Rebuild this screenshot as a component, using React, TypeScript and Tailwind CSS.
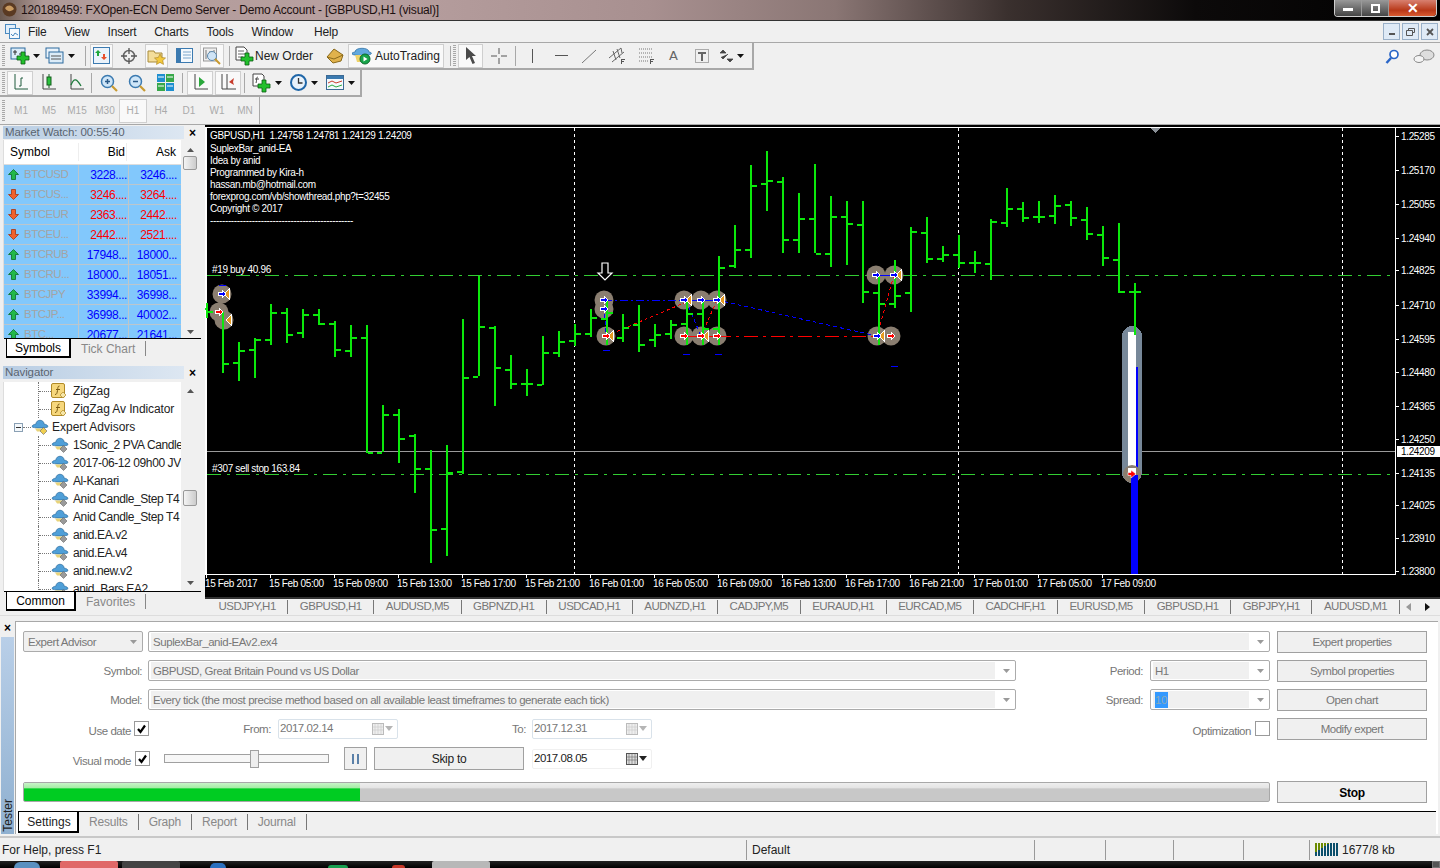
import React from 'react';

// [x, high, low, open, close]
const bars: number[][] = [
  [206, 303, 318, 308, 311], [222, 312, 373, 310, 363], [238, 342, 381, 362, 350], [254, 338, 378, 349, 339],
  [270, 304, 345, 339, 312], [286, 308, 343, 312, 334], [302, 309, 338, 332, 314], [318, 309, 325, 314, 323],
  [334, 321, 357, 323, 349], [350, 325, 357, 350, 337], [366, 325, 453, 337, 452], [382, 405, 452, 452, 414],
  [398, 409, 463, 414, 438], [414, 434, 493, 435, 468], [430, 450, 563, 468, 529], [446, 445, 556, 528, 472],
  [462, 319, 474, 471, 377], [478, 276, 376, 376, 326], [494, 326, 406, 327, 367], [510, 355, 389, 369, 383],
  [526, 369, 396, 383, 383], [542, 336, 385, 384, 352], [558, 331, 357, 352, 341], [574, 324, 346, 340, 333],
  [590, 309, 337, 333, 317], [606, 300, 345, 318, 312], [622, 314, 342, 337, 327], [638, 305, 352, 324, 344],
  [654, 324, 347, 339, 334], [670, 320, 339, 333, 324], [686, 302, 345, 323, 313], [702, 302, 345, 313, 328],
  [718, 256, 345, 328, 267], [734, 225, 268, 265, 249], [750, 165, 258, 249, 185], [766, 151, 211, 183, 180],
  [782, 177, 253, 181, 239], [798, 193, 253, 239, 218], [814, 164, 253, 218, 253], [830, 196, 267, 253, 216],
  [846, 201, 265, 216, 223], [862, 201, 303, 224, 291], [878, 277, 345, 292, 303], [894, 260, 308, 303, 295],
  [910, 227, 312, 292, 231], [926, 217, 263, 232, 258], [942, 246, 262, 258, 254], [958, 235, 268, 254, 262],
  [974, 251, 273, 262, 262], [990, 219, 280, 263, 221], [1006, 188, 227, 222, 208], [1022, 202, 222, 208, 217],
  [1038, 201, 223, 216, 216], [1054, 195, 224, 215, 205], [1070, 201, 226, 204, 217], [1086, 207, 240, 219, 233],
  [1102, 226, 266, 234, 257], [1118, 223, 293, 259, 291], [1134, 283, 335, 291, 291],
];

const priceLabels: [string, number][] = [
  ['1.25285', 136], ['1.25170', 170], ['1.25055', 204], ['1.24940', 238], ['1.24825', 270], ['1.24710', 305],
  ['1.24595', 339], ['1.24480', 372], ['1.24365', 406], ['1.24250', 439], ['1.24135', 473], ['1.24025', 505],
  ['1.23910', 538], ['1.23800', 571],
];

const timeLabels = [
  '15 Feb 2017', '15 Feb 05:00', '15 Feb 09:00', '15 Feb 13:00', '15 Feb 17:00', '15 Feb 21:00', '16 Feb 01:00',
  '16 Feb 05:00', '16 Feb 09:00', '16 Feb 13:00', '16 Feb 17:00', '16 Feb 21:00', '17 Feb 01:00', '17 Feb 05:00',
  '17 Feb 09:00',
];

const comments = [
  'SuplexBar_anid-EA', 'Idea by anid', 'Programmed by Kira-h', 'hassan.mb@hotmail.com',
  'forexprog.com/vb/showthread.php?t=32455', 'Copyright © 2017', '------------------------------------------------',
];

// x, y, arrow colour, left-pointing tail
const markers: [number, number, string, boolean][] = [
  [222, 294, 'blue', true], [224, 320, 'none', true], [219, 312, 'red', false],
  [604, 309, 'blue', false], [604, 300, 'blue', false], [606, 336, 'red', true],
  [684, 300, 'blue', true], [701, 300, 'blue', false], [717, 300, 'blue', true],
  [684, 336, 'red', false], [701, 336, 'red', true], [717, 336, 'red', false],
  [876, 275, 'blue', false], [894, 275, 'blue', true], [877, 336, 'blue', true], [891, 336, 'red', false],
];

const market = [
  ['BTCUSD', 'up', '3228....', '3246....'], ['BTCUS...', 'down', '3246....', '3264....'],
  ['BTCEUR', 'down', '2363....', '2442....'], ['BTCEU...', 'down', '2442....', '2521....'],
  ['BTCRUB', 'up', '17948...', '18000...'], ['BTCRU...', 'up', '18000...', '18051...'],
  ['BTCJPY', 'up', '33994...', '36998...'], ['BTCJP...', 'up', '36998...', '40002...'],
  ['BTC...', 'up', '20677...', '21641...'],
];

const eas = [
  '1Sonic_2 PVA Candle', '2017-06-12 09h00 JV', 'Al-Kanari', 'Anid Candle_Step T4', 'Anid Candle_Step T4',
  'anid.EA.v2', 'anid.EA.v4', 'anid.new.v2', 'anid_Bars EA2',
];

const chartTabs = [
  'USDJPY,H1', 'GBPUSD,H1', 'AUDUSD,M5', 'GBPNZD,H1', 'USDCAD,H1', 'AUDNZD,H1', 'CADJPY,M5', 'EURAUD,H1',
  'EURCAD,M5', 'CADCHF,H1', 'EURUSD,M5', 'GBPUSD,H1', 'GBPJPY,H1', 'AUDUSD,M1',
];

const Caret = () => (
  <svg width="7" height="4" viewBox="0 0 7 4" className="shrink-0"><path d="M0 0h7L3.500 4z" fill="#111" /></svg>
);

const Grip = () => (
  <div className="w-[3px] h-[22px] shrink-0 mx-[2px] bg-[repeating-linear-gradient(180deg,#a8a8a8_0,#a8a8a8_1px,transparent_1px,transparent_2px)]" />
);

const Sep = ({ className = '' }: { className?: string }) => <div className={`w-px h-[20px] bg-[#a8a8a8] shrink-0 ${className}`} />;

const Btn = ({ w, pressed, children }: { w: string; pressed?: boolean; children: React.ReactNode }) => (
  <div className={`${w} h-[24px] shrink-0 flex items-center justify-center gap-[3px] ${pressed ? 'border border-[#cfcfcf] bg-[#f9f9f9]' : ''}`}>
    {children}
  </div>
);

const GreenPlus = ({ x, y }: { x: number; y: number }) => (
  <path d={`M${x + 4} ${y}h4v4h4v4h-4v4h-4v-4h-4v-4h4z`} fill="#22c02c" stroke="#0b5c12" strokeWidth="0.8" />
);

const Ico = ({ children, w = 20, h = 20 }: { children: React.ReactNode; w?: number; h?: number }) => (
  <svg width={w} height={h} viewBox={`0 0 ${w} ${h}`} className="shrink-0">{children}</svg>
);

const Arrow = ({ dir }: { dir: string }) => (
  <svg width="11" height="11" viewBox="0 0 11 11" className="shrink-0">
    {dir === 'up'
      ? <path d="M5.500 .5L10.500 5.500H7.500V10.500H3.500V5.500H.5z" fill="#22b84a" stroke="#0c6e28" strokeWidth=".8" />
      : <path d="M5.500 10.500L10.500 5.500H7.500V.5H3.500V5.500H.5z" fill="#f0622c" stroke="#a83510" strokeWidth=".8" />}
  </svg>
);

const EaIcon = ({ diamond = '#9a9a9a' }: { diamond?: string }) => (
  <svg width="18" height="16" viewBox="0 0 18 16" className="shrink-0">
    <path d="M5 5C5 0 13 0 13 5 15.500 5.500 17 6.500 17 7.500 17 9.500 1 9.500 1 7.500 1 6.500 2.500 5.500 5 5z" fill="#4f9fd8" stroke="#2a6a9c" strokeWidth=".7" />
    <path d="M4 9.500h9l-3 3H6z" fill="#e8d37a" />
    <path d="M12.500 8.500l3.500 3.500-3.500 3.500L9 12z" fill={diamond} stroke="#666" strokeWidth=".6" />
  </svg>
);

const FnIcon = () => (
  <svg width="16" height="16" viewBox="0 0 16 16" className="shrink-0">
    <rect x=".5" y=".5" width="13" height="14" rx="1.500" fill="#f6d77c" stroke="#b08a28" />
    <path d="M8.500 3C6.500 3 7 5 6.500 7.500S6 11.500 4 11.500M5 6.500h4" stroke="#7b5a10" fill="none" strokeWidth="1" />
    <path d="M12 9l3 3-3 3-3-3z" fill="#f6e6a8" stroke="#b08a28" strokeWidth=".7" />
  </svg>
);

const Combo = ({ w, children, plain }: { w: string; children?: React.ReactNode; plain?: boolean }) => (
  <div className={`${w} h-[21px] shrink-0 flex items-center justify-between border border-[#ababab] rounded-[2px] pl-[2px] pr-[5px] text-[#777] text-[11.500px] tracking-[-0.43px] ${plain ? 'bg-[#f0f0f0]' : 'bg-white'}`}>
    <div className="flex-1 min-w-0 h-[17px] bg-[#f0f0f0] flex items-center px-[2px] pt-[2px] mr-[8px] whitespace-nowrap overflow-hidden">{children}</div>
    <svg width="7" height="4" viewBox="0 0 7 4" className="shrink-0"><path d="M0 0h7L3.500 4z" fill="#9a9a9a" /></svg>
  </div>
);

const GreyBtn = ({ children, bold }: { children: React.ReactNode; bold?: boolean }) => (
  <div className={`w-[150px] h-[22px] shrink-0 flex items-center justify-center pt-[2px] border border-[#a0a0a0] bg-[#f0f0f0] ${bold ? 'font-bold text-black text-[12px] tracking-[-0.3px]' : 'text-[#777] text-[11.500px] tracking-[-0.5px]'}`}>
    {children}
  </div>
);

const Check = ({ on }: { on?: boolean }) => (
  <div className="w-[15px] h-[15px] shrink-0 border border-[#9a9a9a] bg-white flex items-center justify-center">
    {on && <svg width="11" height="10" viewBox="0 0 11 10"><path d="M2 5l2.500 3L9 1.500" stroke="#000" strokeWidth="2.200" fill="none" /></svg>}
  </div>
);

const DateBox = ({ w, value, active }: { w: string; value: string; active?: boolean }) => (
  <div className={`${w} h-[20px] shrink-0 flex items-center justify-between border ${active ? 'border-[#f0f0f0] text-[#222]' : 'border-[#d9e2ea] text-[#777]'} bg-white rounded-[2px] pl-[1px] pr-[4px] text-[11.500px] tracking-[-0.45px]`}>
    <span>{value}</span>
    <span className="flex items-center gap-[1px]">
      <svg width="12" height="12" viewBox="0 0 12 12"><rect x=".5" y=".5" width="11" height="11" fill={active ? '#ddd' : '#eee'} stroke={active ? '#555' : '#bbb'} /><path d="M3 1v10M6 1v10M9 1v10M1 4h10M1 7h10" stroke={active ? '#777' : '#ccc'} strokeWidth=".7" /></svg>
      <svg width="8" height="5" viewBox="0 0 8 5"><path d="M0 0h8L4 5z" fill={active ? '#222' : '#b5b5b5'} /></svg>
    </span>
  </div>
);

const PanelHeader = ({ title }: { title: string }) => (
  <div className="h-[13px] flex items-center shrink-0 mx-[3px]">
    <div className="w-[181px] h-[13px] flex items-center pl-[2px] text-[11.500px] tracking-[-0.1px] text-[#5a6470] bg-[linear-gradient(to_right,#b8cde3,#dde7f2)]">{title}</div>
    <span className="ml-[5px] text-[12px] leading-[12px] font-bold text-black">×</span>
  </div>
);

const ScrollArrow = ({ down }: { down?: boolean }) => (
  <svg width="7" height="4" viewBox="0 0 7 4"><path d={down ? 'M0 0h7L3.500 4z' : 'M0 4h7L3.500 0z'} fill="#555" /></svg>
);

const SideTabs = ({ active, other, w }: { active: string; other: string; w: string }) => (
  <div className="mx-[4px] border-t border-black flex h-[20px] shrink-0">
    <div className={`${w} ml-[2px] bg-white border-l border-r-2 border-b-2 border-black flex items-center justify-center`}>{active}</div>
    <div className="pl-[10px] pr-[10px] my-[2px] text-[#888] border-r border-[#888] flex items-center">{other}</div>
  </div>
);

const Marker = ({ m }: { m: [number, number, string, boolean] }) => {
  const [x, y, c, tail] = m;
  return (
    <g>
      {tail && <path d={`M${x + 7} ${y - 5}v10l-5-5z`} fill="#e69a20" stroke="#fff" strokeWidth="1" />}
      {c !== 'none' && <path d={`M${x + 4} ${y}l-4-4v2.500h-4v3h4v2.500z`} fill={c} stroke="#fff" strokeWidth="1" />}
    </g>
  );
};

const Chart = () => (
  <svg width="1235" height="472" viewBox="205 125 1235 472" className="block shrink-0" shapeRendering="crispEdges">
    <rect x="205" y="125" width="1235" height="472" fill="#000" />
    <rect x="205" y="127" width="1235" height="1" fill="#fff" />
    <rect x="205" y="127" width="2" height="448" fill="#fff" />
    <rect x="1395" y="127" width="1" height="448" fill="#fff" />
    <rect x="205" y="574" width="1191" height="1" fill="#fff" />
    <path d="M1151 128h9l-4.500 5z" fill="#8a9097" />
    {[574, 958, 1342].map(x => (
      <line key={x} x1={x + 0.5} x2={x + 0.5} y1="128" y2="574" stroke="#fff" strokeDasharray="3 3" />
    ))}
    <line x1="207" x2="1395" y1="275.500" y2="275.500" stroke="#32cd32" strokeDasharray="14 6 3 6" />
    <line x1="207" x2="1395" y1="474.500" y2="474.500" stroke="#32cd32" strokeDasharray="14 6 3 6" />
    <line x1="207" x2="1395" y1="451.500" y2="451.500" stroke="#9a9a9a" />
    <rect x="1122" y="326" width="20" height="157" rx="10" fill="#778899" />
    <rect x="1128" y="332" width="8" height="143" fill="#fff" />
    <rect x="1136" y="367" width="2" height="108" fill="#00f" />
    {markers.map((m, i) => <circle key={i} cx={m[0]} cy={m[1]} r="9.500" fill="#8a7e70" shapeRendering="auto" />)}
    <circle cx="1132" cy="474" r="9" fill="#8a7e70" shapeRendering="auto" />
    <rect x="1128" y="468" width="8" height="7" fill="#fff" />
    <rect x="1131" y="475" width="7" height="99" fill="#00f" />
    <g fill="none">
      <path d="M604 300.500H684" stroke="#00f" strokeDasharray="8 3 2 3" />
      <path d="M684 300.500H717M875 275.500H893" stroke="#00f" />
      <path d="M684 336.500H717" stroke="#f00" />
      <path d="M717 336.500H877" stroke="#f00" strokeDasharray="14 5 3 5" />
      <path d="M604 300L606 336M686 300L701 336M717 300L877 336" stroke="#00f" strokeDasharray="4 3" />
      <path d="M606 336L684 303M701 336L717 300M877 336L894 275" stroke="#f00" strokeDasharray="3 3" />
    </g>
    {bars.map(([x, h, l, o, c]) => (
      <g key={x} fill="#0be80b">
        <rect x={x} y={h} width="2" height={l - h} />
        <rect x={x - 5} y={o} width="5" height="2" />
        <rect x={x + 2} y={c} width="5" height="2" />
      </g>
    ))}
    {markers.map((m, i) => <Marker key={i} m={m} />)}
    <path d="M1136 474l-5-4v2.500h-3v3h3V478z" fill="#f00" stroke="#fff" strokeWidth=".6" shapeRendering="auto" />
    {[[219, 285], [603, 350], [683, 354], [715, 354], [891, 366]].map(([x, y]) => (
      <rect key={x} x={x} y={y} width="7" height="1" fill="#00f" />
    ))}
    <path d="M602 263h6v10h4l-7 7-7-7h4z" fill="#000" stroke="#fff" strokeWidth="1.200" shapeRendering="auto" />
    <g fontFamily="'Liberation Sans', sans-serif" fontSize="10" letterSpacing="-0.35" fill="#fff" shapeRendering="auto">
      <text x="210" y="139" className="whitespace-pre">GBPUSD,H1  1.24758 1.24781 1.24129 1.24209</text>
      {comments.map((c, i) => <text key={c} x="210" y={152 + i * 12}>{c}</text>)}
      <text x="212" y="273">#19 buy 40.96</text>
      <text x="212" y="472">#307 sell stop 163.84</text>
      {priceLabels.map(([p, y]) => (
        <g key={p}>
          <rect x="1395" y={y} width="4" height="1" shapeRendering="crispEdges" />
          <text x="1401" y={y + 4}>{p}</text>
        </g>
      ))}
      <rect x="1397" y="446" width="43" height="11" shapeRendering="crispEdges" />
      <text x="1401" y="455" fill="#000">1.24209</text>
      {timeLabels.map((t, i) => (
        <g key={i}>
          <rect x={206 + i * 64} y="574" width="1" height="4" shapeRendering="crispEdges" />
          <text x={205 + i * 64} y="587">{t}</text>
        </g>
      ))}
    </g>
  </svg>
);

const Toolbar1 = () => (
  <div className="h-[28px] shrink-0 border-t border-[#a8a8a8] flex items-center">
    <div className="w-[754px] h-full flex items-center border-b-2 border-r-2 border-[#a8a8a8]">
      <Grip />
      <Btn w="w-[34px] ml-[1px]">
        <Ico w={20} h={18}><rect x="1" y="1" width="14" height="11" fill="#dcecf8" stroke="#2d6a9e" /><path d="M3 5h4M5 3v5M9 7h4" stroke="#333" /><GreenPlus x={7} y={5} /></Ico><Caret />
      </Btn>
      <Btn w="w-[36px]">
        <Ico w={20} h={18}><rect x="1" y="1" width="13" height="10" fill="#eaf3fb" stroke="#2d6a9e" /><rect x="4" y="5" width="14" height="11" fill="#dcecf8" stroke="#2d6a9e" /><path d="M6 9h10M6 12h10" stroke="#555" /></Ico><Caret />
      </Btn>
      <Sep className="ml-[7px] mr-[4px]" />
      <Btn w="w-[23px]" pressed>
        <Ico w={17} h={17}><rect x=".5" y=".5" width="16" height="16" fill="#eaf3fb" stroke="#3b7ab0" /><path d="M5 3l3 3H6v3H4V6H2z" fill="#1fa83c" /><path d="M11 13l3-3h-2V7h-2v3H8z" fill="#e8502c" /></Ico>
      </Btn>
      <Btn w="w-[24px] ml-[4px]">
        <Ico w={18} h={18}><circle cx="9" cy="9" r="5.500" fill="none" stroke="#666" strokeWidth="1.500" /><path d="M9 1v6M9 11v6M1 9h6M11 9h6" stroke="#555" strokeWidth="1.300" /></Ico>
      </Btn>
      <Btn w="w-[23px] ml-[4px]" pressed>
        <Ico w={19} h={18}><path d="M1 4h6l1 2h7v9H1z" fill="#f3dd9a" stroke="#a88b3a" /><path d="M13 7l1.700 3.500 3.800.5-2.800 2.600.8 3.800-3.500-2-3.500 2 .8-3.800L7.500 11l3.800-.5z" fill="#f3c93c" stroke="#b08a28" strokeWidth=".7" /></Ico>
      </Btn>
      <Btn w="w-[24px] ml-[4px]">
        <Ico w={17} h={16}><rect x=".5" y=".5" width="16" height="14" fill="#f4f9fd" stroke="#3b7ab0" /><rect x="1" y="1" width="4" height="13" fill="#3b7ab0" /><path d="M7 4h8M7 7h8M7 10h8" stroke="#7aa6cc" /></Ico>
      </Btn>
      <Btn w="w-[24px] ml-[4px]" pressed>
        <Ico w={20} h={20}><rect x="1.500" y="2" width="13" height="13" fill="#eee" stroke="#999" /><path d="M4 4v9M8 5v6M12 4v8" stroke="#777" /><circle cx="10" cy="10" r="4.500" fill="#cfe4f6" stroke="#5b87ab" /><path d="M13 13l5 5" stroke="#c89a30" strokeWidth="2" /></Ico>
      </Btn>
      <Sep className="ml-[5px] mr-[4px]" />
      <div className="w-[86px] shrink-0 flex items-center gap-[1px]">
        <Ico w={20} h={20}><path d="M2 1h8l3 3v10H2z" fill="#fff" stroke="#444" /><path d="M4 5h6M4 8h7M4 11h5" stroke="#666" /><GreenPlus x={7} y={7} /></Ico>
        <span className="whitespace-nowrap text-[#222]">New Order</span>
      </div>
      <Btn w="w-[24px] ml-[3px]">
        <Ico w={18} h={16}><path d="M1 9l7-8 9 6-2 6-8 2z" fill="#e0b24c" stroke="#8a6a1c" /><path d="M1 9l7 2 9-4" stroke="#8a6a1c" fill="none" /></Ico>
      </Btn>
      <Btn w="w-[96px] ml-[1px] gap-[2px]" pressed>
        <Ico w={20} h={19}><path d="M3 6c0-5 14-5 14 0 2 .4 3 1 2 2-2 2-17 2-19 0-.8-1 1-1.600 3-2z" fill="#62a8de" stroke="#2a6a9c" strokeWidth=".7" /><path d="M3 9h14l-2 7H5z" fill="#efd36a" /><circle cx="13" cy="13" r="5" fill="#18a54a" stroke="#0b6a2c" /><path d="M11.500 10.500l4 2.500-4 2.500z" fill="#fff" /></Ico>
        <span className="whitespace-nowrap text-[#222]">AutoTrading</span>
      </Btn>
      <Sep className="ml-[6px]" />
      <Grip />
      <Btn w="w-[25px]" pressed>
        <Ico w={12} h={17}><path d="M1 0l10 9H7l3 7-2.500 1L4.500 10 1 13z" fill="#4a4a4a" /></Ico>
      </Btn>
      <Btn w="w-[28px] ml-[2px]">
        <Ico w={16} h={16}><path d="M8 0v6M8 10v6M0 8h6M10 8h6" stroke="#555" /></Ico>
      </Btn>
      <Sep className="ml-[2px]" />
      <Btn w="w-[33px]"><Ico w={2} h={14}><rect width="1" height="14" fill="#555" /></Ico></Btn>
      <Btn w="w-[25px]"><Ico w={14} h={2}><rect width="13" height="1" fill="#555" /></Ico></Btn>
      <Btn w="w-[30px]"><Ico w={14} h={14}><path d="M0 14L14 1" stroke="#777" /></Ico></Btn>
      <Btn w="w-[27px]">
        <Ico w={17} h={18}><path d="M0 11L12 1M3 15L15 5M4 4l3 9M8 2l3 9M12 1l1 5" stroke="#666" /><path d="M12 12h4v1h-3v1h2v1h-2v2h-1z" fill="#555" /></Ico>
      </Btn>
      <Btn w="w-[29px]">
        <Ico w={16} h={17}><path d="M1 2h13M1 6h13M1 10h13M1 14h10" stroke="#777" strokeDasharray="1 1" /><path d="M12 12h4v1h-3v1h2v1h-2v2h-1z" fill="#555" /></Ico>
      </Btn>
      <Btn w="w-[27px]"><span className="text-[13px] text-[#666] font-['DejaVu_Sans',sans-serif]">A</span></Btn>
      <Btn w="w-[30px]">
        <Ico w={14} h={14}><rect x=".5" y=".5" width="13" height="13" fill="none" stroke="#666" strokeDasharray="1 1" /><path d="M3 3h8v2H8v7H6V5H3z" fill="#666" /></Ico>
      </Btn>
      <Btn w="w-[28px] gap-[4px]">
        <Ico w={14} h={14}><path d="M1 4l3-3 3 3zM8 10h6l-3 3zM2 8l2 2 5-5" stroke="#444" fill="#444" strokeWidth=".8" /></Ico><Caret />
      </Btn>
    </div>
    <div className="flex-1" />
    <div className="flex items-center gap-[14px] mr-[5px]">
      <Ico w={14} h={16}><circle cx="9" cy="5.500" r="4" fill="#fff" stroke="#2a66c8" strokeWidth="1.700" /><path d="M6 9l-4.500 5" stroke="#2a66c8" strokeWidth="2.500" /></Ico>
      <Ico w={22} h={15}><ellipse cx="14" cy="6" rx="7" ry="5" fill="#ddd" stroke="#888" /><ellipse cx="6" cy="10" rx="5" ry="3.500" fill="#f4f4f4" stroke="#888" /></Ico>
    </div>
  </div>
);

const Toolbar2 = () => (
  <div className="h-[27px] w-[362px] shrink-0 flex items-center border-b-2 border-r-2 border-[#a8a8a8]">
    <Grip />
    <Btn w="w-[26px]" pressed>
      <Ico w={16} h={17}><path d="M3 0v15h13M9 4v8M9 4h2M9 12H7" stroke="#1f5a3c" fill="none" /></Ico>
    </Btn>
    <Btn w="w-[30px]"><Ico w={16} h={17}><path d="M3 0v15h13" stroke="#444" fill="none" /><rect x="7" y="3" width="4" height="8" fill="#2ac23c" stroke="#145c1e" /><path d="M9 0v3M9 11v3" stroke="#145c1e" /></Ico></Btn>
    <Btn w="w-[26px]"><Ico w={16} h={17}><path d="M3 0v15h13" stroke="#444" fill="none" /><path d="M3 11c3-8 6-6 10 1" stroke="#1e7a3c" fill="none" strokeWidth="1.300" /></Ico></Btn>
    <Sep className="ml-[2px] mr-[3px]" />
    <Btn w="w-[28px]"><Ico w={18} h={18}><circle cx="7.500" cy="7.500" r="6" fill="#cfe6f8" stroke="#3b7ab0" strokeWidth="1.500" /><path d="M5 7.500h5M7.500 5v5" stroke="#2a5a88" strokeWidth="1.500" /><path d="M12 12l5 5" stroke="#c89a30" strokeWidth="2.200" /></Ico></Btn>
    <Btn w="w-[28px]"><Ico w={18} h={18}><circle cx="7.500" cy="7.500" r="6" fill="#cfe6f8" stroke="#3b7ab0" strokeWidth="1.500" /><path d="M5 7.500h5" stroke="#2a5a88" strokeWidth="1.500" /><path d="M12 12l5 5" stroke="#c89a30" strokeWidth="2.200" /></Ico></Btn>
    <Btn w="w-[28px]"><Ico w={17} h={17}><rect width="8" height="8" fill="#1f8fd0" /><rect x="9" width="8" height="8" fill="#38a84a" /><rect y="9" width="8" height="8" fill="#38a84a" /><rect x="9" y="9" width="8" height="8" fill="#1f8fd0" /><path d="M1 3h6M10 3h6M1 12h6M10 12h6" stroke="#fff" /></Ico></Btn>
    <Sep className="ml-[3px] mr-[4px]" />
    <Btn w="w-[26px]" pressed><Ico w={16} h={17}><path d="M3 0v15h13" stroke="#444" fill="none" /><path d="M7 3l6 5-6 5z" fill="#2aa83c" /></Ico></Btn>
    <Btn w="w-[26px] ml-[2px]" pressed><Ico w={18} h={17}><path d="M3 0v15h14M8 0v15" stroke="#444" fill="none" /><path d="M10 8l5-4-1 4 1 3z" fill="#c83c2c" /></Ico></Btn>
    <Sep className="ml-[3px] mr-[3px]" />
    <Btn w="w-[38px] gap-[4px]"><Ico w={19} h={20}><path d="M1 1h9l2 2v10H1z" fill="#fff" stroke="#444" /><path d="M6 4C4 4 5 7 4 10M3 6h4" stroke="#444" fill="none" /><GreenPlus x={6} y={7} /></Ico><Caret /></Btn>
    <Btn w="w-[36px] gap-[4px]"><Ico w={17} h={17}><circle cx="8.500" cy="8.500" r="7.500" fill="#e8f2fb" stroke="#1f66a8" strokeWidth="2" /><path d="M8.500 4v5h4" stroke="#333" fill="none" strokeWidth="1.300" /></Ico><Caret /></Btn>
    <Btn w="w-[36px] gap-[4px]"><Ico w={18} h={15}><rect x=".5" y=".5" width="17" height="14" fill="#f4f9fd" stroke="#3b6a94" /><rect x="1" y="1" width="16" height="3" fill="#3b7ab0" /><path d="M2 8l4-2 4 2 6-2" stroke="#c83c2c" fill="none" /><path d="M2 12l4-2 4 2 6-2" stroke="#2aa83c" fill="none" /></Ico><Caret /></Btn>
  </div>
);

const Toolbar3 = () => (
  <div className="h-[28px] shrink-0 flex border-b border-[#a8a8a8]">
    <div className="w-[260px] flex items-center border-r border-[#a8a8a8] text-[10px] text-[#aaa]">
      <Grip />
      {['M1', 'M5', 'M15', 'M30', 'H1', 'H4', 'D1', 'W1', 'MN'].map(t => (
        <div key={t} className={`w-[28px] h-[24px] flex items-center justify-center ${t === 'H1' ? 'border border-[#cfcfcf] bg-[#f9f9f9]' : ''}`}>{t}</div>
      ))}
    </div>
  </div>
);

const MarketWatch = () => (
  <div className="h-[233px] pt-[1px] flex flex-col shrink-0">
    <PanelHeader title="Market Watch: 00:55:40" />
    <div className="mt-[1px] mx-[3px] flex flex-1 min-h-0 overflow-hidden border-l border-[#ddd]">
      <div className="w-[177px] bg-white overflow-hidden">
        <div className="flex h-[25px] items-center border-b border-[#ddd]">
          <div className="w-[75px] pl-[6px] border-r border-[#eee]">Symbol</div>
          <div className="w-[48px] pr-[1px] text-right border-r border-[#eee]">Bid</div>
          <div className="w-[50px] pr-[1px] text-right">Ask</div>
        </div>
        {market.map(([s, d, b, a]) => (
          <div key={s} className="flex h-[20px] items-center bg-[#82c8fc] border-b border-[#bcc6cc]">
            <div className="w-[75px] h-full pl-[4px] flex items-center gap-[5px] text-[#a4a4a4] text-[11.500px] tracking-[-0.5px] border-r border-[#bcc6cc] whitespace-nowrap"><Arrow dir={d} />{s}</div>
            <div className={`w-[50px] h-full flex items-center justify-end pr-[1px] tracking-[-0.4px] border-r border-[#bcc6cc] ${d === 'up' ? 'text-[#0000ff]' : 'text-[#ff0000]'}`}>{b}</div>
            <div className={`w-[52px] h-full flex items-center justify-end pr-[4px] tracking-[-0.4px] ${d === 'up' ? 'text-[#0000ff]' : 'text-[#ff0000]'}`}>{a}</div>
          </div>
        ))}
      </div>
      <div className="w-[16px] ml-[1px] flex flex-col items-center pt-[8px]">
        <ScrollArrow />
        <div className="w-[14px] h-[14px] mt-[4px] border border-[#999] rounded-[2px] bg-[linear-gradient(to_right,#f4f4f4,#ccc)]" />
        <div className="flex-1" />
        <div className="pb-[4px]"><ScrollArrow down /></div>
      </div>
    </div>
    <SideTabs active="Symbols" other="Tick Chart" w="w-[65px]" />
  </div>
);

const Navigator = () => (
  <div className="mt-[8px] mb-[4px] flex flex-col flex-1 min-h-0">
    <PanelHeader title="Navigator" />
    <div className="mt-[3px] mx-[3px] flex flex-1 min-h-0 overflow-hidden border-l border-[#ddd]">
      <div className="w-[177px] bg-white overflow-hidden">
        {['ZigZag', 'ZigZag Av Indicator'].map(n => (
          <div key={n} className="h-[18px] flex items-center">
            <div className="w-[35px] h-full shrink-0 border-r border-dotted border-[#777]" />
            <div className="w-[12px] h-px shrink-0 border-b border-dotted border-[#777]" />
            <FnIcon />
            <span className="ml-[6px] whitespace-nowrap text-[#222] tracking-[-0.1px]">{n}</span>
          </div>
        ))}
        <div className="h-[18px] flex items-center">
          <div className="ml-[10px] w-[9px] h-[9px] shrink-0 border border-[#8aa0b4] bg-[#f4f8fb] flex items-center justify-center"><div className="w-[5px] h-px bg-[#333]" /></div>
          <div className="w-[8px] shrink-0 border-b border-dotted border-[#777]" />
          <EaIcon diamond="#f0cf50" />
          <span className="ml-[3px] whitespace-nowrap text-[#222]">Expert Advisors</span>
        </div>
        {eas.map((n, i) => (
          <div key={i} className="h-[18px] flex items-center">
            <div className="w-[35px] h-full shrink-0 border-r border-dotted border-[#777]" />
            <div className="w-[12px] shrink-0 border-b border-dotted border-[#777]" />
            <EaIcon />
            <span className="ml-[4px] whitespace-nowrap text-[#222] tracking-[-0.4px]">{n}</span>
          </div>
        ))}
      </div>
      <div className="w-[16px] ml-[1px] flex flex-col items-center pt-[7px] relative">
        <ScrollArrow />
        <div className="w-[14px] h-[16px] mt-[97px] border border-[#999] rounded-[2px] bg-[linear-gradient(to_right,#f4f4f4,#ccc)]" />
        <div className="flex-1" />
        <div className="pb-[6px]"><ScrollArrow down /></div>
      </div>
    </div>
    <SideTabs active="Common" other="Favorites" w="w-[70px]" />
  </div>
);

const Label = ({ w, children }: { w: string; children: React.ReactNode }) => (
  <div className={`${w} shrink-0 text-right text-[#777] text-[11.500px] tracking-[-0.45px] whitespace-nowrap`}>{children}</div>
);

const Tester = () => (
  <div className="h-[221px] shrink-0 flex border-t border-[#ddd]">
    <div className="w-[15px] shrink-0 flex flex-col items-center">
      <span className="text-[12px] leading-[12px] font-bold mt-[6px] text-black">×</span>
      <div className="mt-[3px] w-[13px] flex-1 mb-[2px] flex items-end justify-center bg-[linear-gradient(to_bottom,#b9cfe8,#8fb0d0)]">
        <span className="[writing-mode:vertical-rl] rotate-180 text-[#222] pt-[2px]">Tester</span>
      </div>
    </div>
    <div className="flex-1 mt-[5px] mr-[2px] mb-[2px] border-l border-t border-[#a8a8a8] bg-white flex flex-col">
      <div className="h-[189px] pl-[7px] pr-[11px] pt-[9px] flex flex-col shrink-0">
        <div className="h-[21px] flex items-center">
          <Combo w="w-[120px]" plain>Expert Advisor</Combo>
          <Combo w="flex-1 min-w-0 ml-[5px] mr-[7px]">SuplexBar_anid-EAv2.ex4</Combo>
          <GreyBtn>Expert properties</GreyBtn>
        </div>
        <div className="h-[21px] mt-[8px] flex items-center">
          <Label w="w-[119px] pt-[2px]">Symbol:</Label>
          <Combo w="w-[868px] ml-[6px]">GBPUSD, Great Britain Pound vs US Dollar</Combo>
          <Label w="w-[127px] pt-[2px]">Period:</Label>
          <Combo w="w-[120px] ml-[7px]">H1</Combo>
          <div className="ml-[7px]"><GreyBtn>Symbol properties</GreyBtn></div>
        </div>
        <div className="h-[21px] mt-[8px] flex items-center">
          <Label w="w-[119px] pt-[2px]">Model:</Label>
          <Combo w="w-[868px] ml-[6px]">Every tick (the most precise method based on all available least timeframes to generate each tick)</Combo>
          <Label w="w-[127px] pt-[2px]">Spread:</Label>
          <Combo w="w-[120px] ml-[7px]"><span className="bg-[#3399ff] text-[#8ab] w-[13px]">10</span></Combo>
          <div className="ml-[7px]"><GreyBtn>Open chart</GreyBtn></div>
        </div>
        <div className="h-[21px] mt-[8px] flex items-center">
          <Label w="w-[108px] pt-[6px]">Use date</Label>
          <div className="ml-[3px]"><Check on /></div>
          <Label w="w-[122px] pt-[2px]">From:</Label>
          <div className="ml-[7px]"><DateBox w="w-[120px]" value="2017.02.14" /></div>
          <Label w="w-[128px] pt-[2px]">To:</Label>
          <div className="ml-[6px]"><DateBox w="w-[120px]" value="2017.12.31" /></div>
          <Label w="w-[599px] pt-[6px]">Optimization</Label>
          <div className="ml-[4px]"><Check /></div>
          <div className="ml-[7px]"><GreyBtn>Modify expert</GreyBtn></div>
        </div>
        <div className="h-[23px] mt-[8px] flex items-center">
          <Label w="w-[108px] pt-[6px]">Visual mode</Label>
          <div className="ml-[4px]"><Check on /></div>
          <div className="ml-[14px] w-[165px] h-[9px] border border-[#a0a0a0] bg-[#f7f7f7] flex items-center pl-[85px]">
            <div className="w-[9px] h-[18px] border border-[#a0a0a0] bg-[#eee] shrink-0" />
          </div>
          <div className="ml-[15px] w-[23px] h-[23px] border border-[#a0a0a0] bg-[#f0f0f0] flex items-center justify-center gap-[3px]">
            <div className="w-[2px] h-[10px] bg-[#5a80a8]" /><div className="w-[2px] h-[10px] bg-[#5a80a8]" />
          </div>
          <div className="ml-[7px] w-[150px] h-[23px] border border-[#a0a0a0] bg-[#f0f0f0] flex items-center justify-center text-[#222] tracking-[-0.3px]">Skip to</div>
          <div className="ml-[8px]"><DateBox w="w-[120px]" value="2017.08.05" active /></div>
        </div>
        <div className="mt-[11px] h-[22px] flex items-center gap-[7px]">
          <div className="flex-1 h-[20px] border border-[#a8a8a8] rounded-[2px] flex overflow-hidden bg-[linear-gradient(to_bottom,#eeeeee_0,#e4e4e4_28%,#c8c8c8_32%,#c8c8c8_100%)]">
            <div className="w-[336px] h-full bg-[linear-gradient(to_bottom,#c8f4c8_0,#a4eca4_28%,#00cc22_32%,#00cc22_100%)]" />
          </div>
          <GreyBtn bold>Stop</GreyBtn>
        </div>
      </div>
      <div className="mx-[2px] flex-1 border-t border-black bg-[#f0f0f0] flex h-[22px]">
        <div className="w-[61px] h-[21px] pl-[2px] bg-white border-l border-r-2 border-b-2 border-black flex items-center justify-center text-[#222]">Settings</div>
        {['Results', 'Graph', 'Report', 'Journal'].map(t => (
          <div key={t} className="h-[16px] mt-[2px] px-[10px] flex items-center text-[#888] tracking-[-0.2px] border-r border-[#777]">{t}</div>
        ))}
      </div>
    </div>
  </div>
);

const StatusBar = () => (
  <div className="h-[25px] shrink-0 border-t-2 border-[#c8c8c8] flex items-center text-[#222]">
    <div className="w-[747px] pl-[2px] border-r border-[#999] h-[20px] flex items-center">For Help, press F1</div>
    <div className="w-[288px] pl-[5px] border-r border-[#999] h-[20px] flex items-center">Default</div>
    <div className="w-[71px] border-r border-[#999] h-[20px]" />
    <div className="w-[68px] border-r border-[#999] h-[20px]" />
    <div className="w-[70px] border-r border-[#999] h-[20px]" />
    <div className="w-[66px] border-r border-[#999] h-[20px]" />
    <div className="pl-[5px] flex items-center gap-[3px]">
      <svg width="24" height="13" viewBox="0 0 24 13">
        {[0, 3, 6, 9, 12, 15, 18, 21].map((x, i) => (
          <g key={x}>
            <rect x={x} y="0" width="2" height="13" fill="#6b8a00" />
            <rect x={x} y={Math.max(0, 9 - i * 2)} width="2" height={13 - Math.max(0, 9 - i * 2)} fill="#0b4f6c" />
          </g>
        ))}
      </svg>
      <span>1677/8 kb</span>
    </div>
  </div>
);

export default function App() {
  return (
    <div className="w-[1440px] h-[868px] overflow-hidden flex flex-col bg-[#f0f0f0] text-[12px] font-['Liberation_Sans',sans-serif] text-black">
      <div className="h-[21px] shrink-0 flex items-start border-b border-[#333] bg-[linear-gradient(to_right,#6b5a50_0,#b09a98_3%,#b8a0a0_25%,#a89090_45%,#8a7674_58%,#3a302e_70%,#0c0a0a_83%,#000_100%)]">
        <svg width="15" height="15" viewBox="0 0 15 15" className="ml-[2px] mt-[2px] shrink-0"><circle cx="7.500" cy="7.500" r="7" fill="#5a3a22" /><path d="M3 6c3-4 7-3 9 1-3 3-7 3-9-1z" fill="#c89a60" /></svg>
        <span className="ml-[4px] mt-[3px] text-[12px] tracking-[-0.2px] leading-[15px] text-[#1c1010] whitespace-nowrap">120189459: FXOpen-ECN Demo Server - Demo Account - [GBPUSD,H1 (visual)]</span>
        <div className="ml-auto mr-[3px] h-[17px] flex border border-t-0 border-[#cfcfcf] rounded-b-[4px] overflow-hidden">
          <div className="w-[27px] flex items-center justify-center border-r border-[#999] bg-[linear-gradient(to_bottom,#999,#444)]"><div className="w-[10px] h-[3px] mt-[3px] bg-white" /></div>
          <div className="w-[27px] flex items-center justify-center border-r border-[#999] bg-[linear-gradient(to_bottom,#999,#444)]"><div className="w-[9px] h-[9px] border-2 border-white" /></div>
          <div className="w-[47px] flex items-center justify-center text-white font-bold text-[14px] leading-none bg-[linear-gradient(to_bottom,#d88070,#b83818_65%,#d85a30)]">✕</div>
        </div>
      </div>
      <div className="h-[21px] shrink-0 flex items-center">
        <svg width="15" height="15" viewBox="0 0 15 15" className="ml-[5px] shrink-0"><rect x=".5" y=".5" width="10" height="9" fill="#e0eefa" stroke="#4a8ac0" /><rect x="4.500" y="4.500" width="10" height="10" fill="#f4f9fd" stroke="#4a8ac0" /><path d="M6 10l2 2 2-3 3 2" stroke="#4a8ac0" fill="none" /></svg>
        <div className="ml-[8px] flex gap-[18px] text-[#222] tracking-[-0.2px]">
          {['File', 'View', 'Insert', 'Charts', 'Tools', 'Window'].map(m => <span key={m}>{m}</span>)}
          <span className="ml-[3px]">Help</span>
        </div>
        <div className="ml-auto mr-[2px] flex gap-[2px]">
          {['min', 'res', 'cls'].map(k => (
            <div key={k} className="w-[17px] h-[17px] border border-[#9ab0c8] bg-[#dfeaf6] flex items-center justify-center">
              {k === 'min' && <div className="w-[6px] h-[2px] mt-[5px] bg-[#555]" />}
              {k === 'res' && <svg width="9" height="8" viewBox="0 0 9 8"><path d="M2.500 2V.5h6v4H7M.5 2.500h6v5h-6z" fill="none" stroke="#555" /></svg>}
              {k === 'cls' && <svg width="8" height="8" viewBox="0 0 8 8"><path d="M1 1l6 6M7 1L1 7" stroke="#555" strokeWidth="1.800" /></svg>}
            </div>
          ))}
        </div>
      </div>
      <Toolbar1 />
      <Toolbar2 />
      <Toolbar3 />
      <div className="h-[490px] shrink-0 flex">
        <div className="w-[205px] shrink-0 flex flex-col">
          <MarketWatch />
          <Navigator />
        </div>
        <div className="flex-1 flex flex-col min-w-0">
          <Chart />
          <div className="flex-1 border-t-2 border-[#333] flex items-center text-[#777] text-[11.500px] tracking-[-0.5px] pl-[2px]">
            {chartTabs.map((t, i) => (
              <div key={i} className="h-[14px] px-[11.500px] flex items-center whitespace-nowrap border-r border-[#777] last:border-r-0">{t}</div>
            ))}
            <div className="ml-auto flex gap-[14px] mr-[10px]">
              <svg width="5" height="8" viewBox="0 0 5 8"><path d="M5 0v8L0 4z" fill="#999" /></svg>
              <svg width="5" height="8" viewBox="0 0 5 8"><path d="M0 0v8l5-4z" fill="#111" /></svg>
            </div>
          </div>
        </div>
      </div>
      <Tester />
      <StatusBar />
      <div className="flex-1 bg-[linear-gradient(to_bottom,#222,#000)] flex items-end overflow-hidden">
        <div className="ml-[14px] w-[26px] h-[6px] rounded-t-full bg-[#5a90c0]" />
        <div className="ml-[20px] w-[58px] h-[7px] rounded-t-[2px] bg-[#e06868]" />
        <div className="ml-[4px] w-[58px] h-[7px] rounded-t-[2px] bg-[#444]" />
        <div className="ml-[30px] w-[16px] h-[5px] rounded-t-full bg-[#2a70c0]" />
        <div className="ml-[102px] w-[20px] h-[3px] rounded-t-full bg-[#18a050]" />
        <div className="ml-[44px] w-[13px] h-[3px] rounded-t-full bg-[#c83828]" />
        <div className="ml-[27px] w-[58px] h-[7px] rounded-t-[2px] bg-[#b8b8b8]" />
        <div className="ml-auto w-[8px] h-[7px] border border-[#777] bg-[#555]" />
      </div>
    </div>
  );
}
